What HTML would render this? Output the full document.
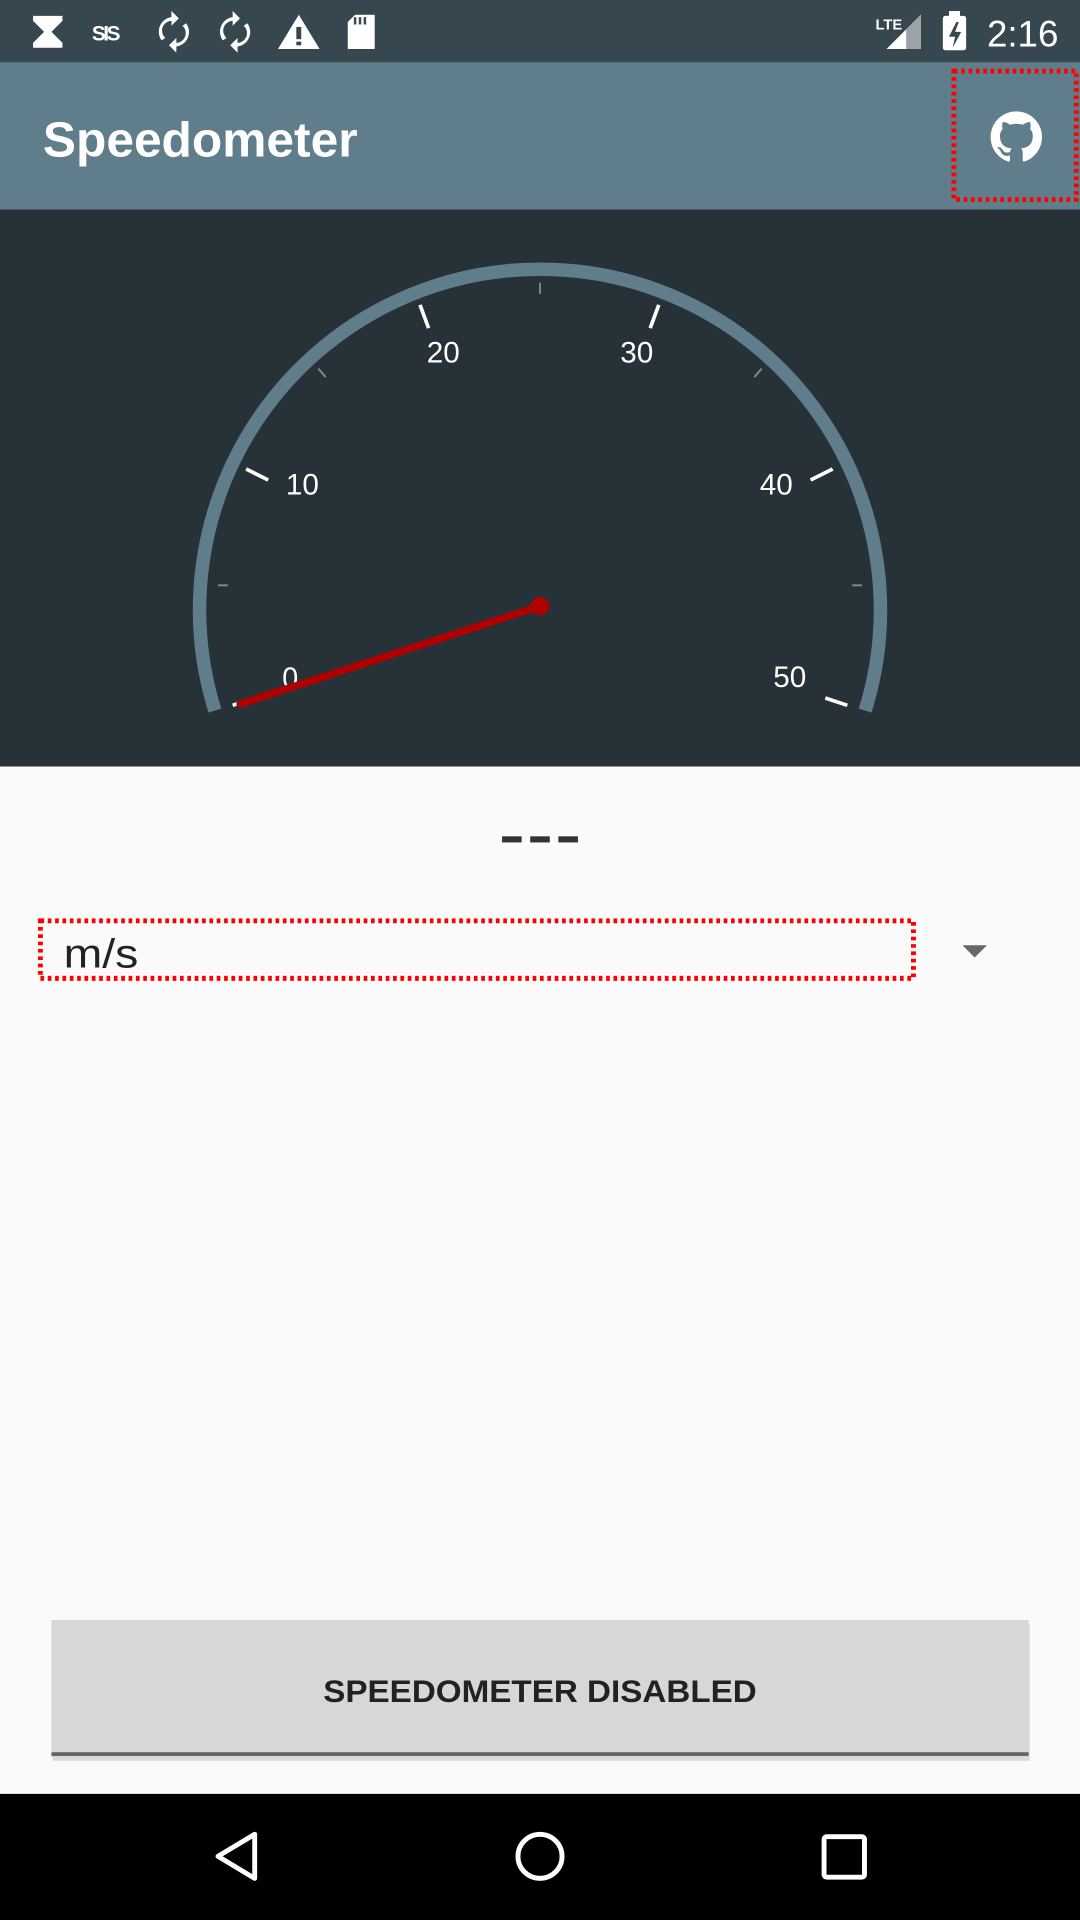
<!DOCTYPE html>
<html><head><meta charset="utf-8">
<style>
html,body{margin:0;padding:0;background:#fafafa;}
svg{display:block;}
text{font-family:"Liberation Sans",sans-serif;}
</style></head>
<body>
<svg width="1080" height="1920" viewBox="0 0 882 1568" xmlns="http://www.w3.org/2000/svg">
<!-- status bar -->
<rect x="0" y="0" width="882" height="51" fill="#37474f"/>
<g fill="#fff">
  <path d="M27 13h24v4l-9 9 9 9v4H27v-4l9-9-9-9z"/>
  <text x="75" y="33" font-size="17" font-weight="bold" letter-spacing="-2">SIS</text>
  <path d="M140 14a12 12 0 0 0-8 19l3-2a8 8 0 0 1 5-14v4l6-6-6-6zM144 38a12 12 0 0 0 8-19l-3 2a8 8 0 0 1-5 14v-4l-6 6 6 6z"/>
  <path d="M190 14a12 12 0 0 0-8 19l3-2a8 8 0 0 1 5-14v4l6-6-6-6zM194 38a12 12 0 0 0 8-19l-3 2a8 8 0 0 1-5 14v-4l-6 6 6 6z"/>
  <path d="M244 12l17 28h-34z"/>
  <path d="M290 12h16v28h-22v-22z"/>
  <path d="M724 40l28-28v28z" fill="#fff"/>
  <path d="M740 24l12-12v28h-12z" fill="#9aa4a8"/>
  <text x="715" y="24" font-size="12" font-weight="bold">LTE</text>
  <rect x="770" y="13" width="19" height="28" rx="2"/>
  <rect x="775" y="9" width="9" height="5"/>
  <text x="806" y="38" font-size="30">2:16</text>
</g>
<path d="M781 18l-6 12h5l-2 9 7-13h-5l3-8z" fill="#37474f"/>
<rect x="289" y="14" width="2" height="6" fill="#37474f"/><rect x="293" y="14" width="2" height="6" fill="#37474f"/><rect x="297" y="14" width="2" height="6" fill="#37474f"/>
<rect x="242" y="22" width="4" height="10" fill="#37474f"/><rect x="242" y="34" width="4" height="3" fill="#37474f"/>

<!-- app bar -->
<rect x="0" y="51" width="882" height="120" fill="#607d8b"/>
<text x="35" y="128" font-size="40" font-weight="bold" fill="#fff" textLength="257" lengthAdjust="spacingAndGlyphs">Speedometer</text>
<g transform="translate(809 91) scale(2.625)" fill="#fff">
<path d="M8 0C3.58 0 0 3.580 0 8c0 3.54 2.29 6.53 5.47 7.59.4.07.55-.17.55-.38 0-.19-.01-.82-.01-1.49-2.01.37-2.53-.49-2.69-.94-.09-.23-.48-.94-.82-1.130-.28-.15-.68-.52-.01-.53.63-.01 1.080.58 1.23.82.72 1.21 1.87.87 2.33.66.07-.52.28-.87.51-1.07-1.78-.2-3.64-.89-3.64-3.95 0-.87.31-1.59.82-2.15-.08-.2-.36-1.02.08-2.12 0 0 .67-.21 2.2.82.64-.18 1.32-.27 2-.27.68 0 1.36.09 2 .27 1.53-1.04 2.2-.82 2.2-.82.44 1.1.16 1.92.08 2.12.51.56.82 1.27.82 2.15 0 3.07-1.87 3.75-3.65 3.95.29.25.54.73.54 1.48 0 1.07-.01 1.93-.01 2.2 0 .21.15.46.55.38A8.013 8.013 0 0 0 16 8c0-4.42-3.58-8-8-8z"/>
</g>
<rect x="779" y="58" width="100" height="105" fill="none" stroke="#f00" stroke-width="4" stroke-dasharray="3 3"/>

<!-- gauge -->
<rect x="0" y="171" width="882" height="455" fill="#263238"/>
<path d="M175.5 580.3 A278 278 0 1 1 706.5 580.3" fill="none" stroke="#607d8b" stroke-width="11"/>
<g stroke="#fff" stroke-width="3">
  <line x1="190" y1="576" x2="208" y2="570"/>
  <line x1="201" y1="383" x2="219" y2="392"/>
  <line x1="343" y1="249" x2="350" y2="268"/>
  <line x1="538" y1="249" x2="531" y2="268"/>
  <line x1="680" y1="383" x2="662" y2="392"/>
  <line x1="692" y1="576" x2="674" y2="570"/>
</g>
<g stroke="#78909c" stroke-width="1.5">
  <line x1="178" y1="478" x2="186" y2="478"/>
  <line x1="260" y1="301" x2="266" y2="308"/>
  <line x1="441" y1="231" x2="441" y2="240"/>
  <line x1="622" y1="301" x2="616" y2="308"/>
  <line x1="704" y1="478" x2="696" y2="478"/>
</g>
<g fill="#fff" font-size="24" text-anchor="middle">
  <text x="237" y="562" textLength="13" lengthAdjust="spacingAndGlyphs">0</text>
  <text x="247" y="404" textLength="27" lengthAdjust="spacingAndGlyphs">10</text>
  <text x="362" y="296" textLength="27" lengthAdjust="spacingAndGlyphs">20</text>
  <text x="520" y="296" textLength="27" lengthAdjust="spacingAndGlyphs">30</text>
  <text x="634" y="404" textLength="27" lengthAdjust="spacingAndGlyphs">40</text>
  <text x="645" y="561" textLength="27" lengthAdjust="spacingAndGlyphs">50</text>
</g>
<line x1="441" y1="495" x2="196" y2="575" stroke="#b00000" stroke-width="6" stroke-linecap="round"/>
<circle cx="441" cy="495" r="7.5" fill="#b00000"/>

<!-- content -->
<rect x="0" y="626" width="882" height="839" fill="#fafafa"/>
<g fill="#333">
  <rect x="410" y="683" width="16" height="5"/>
  <rect x="433" y="683" width="16" height="5"/>
  <rect x="456" y="683" width="16" height="5"/>
</g>
<text x="52" y="790" font-size="33" fill="#222" textLength="61" lengthAdjust="spacingAndGlyphs">m/s</text>
<rect x="33" y="752" width="713" height="47" fill="none" stroke="#f00" stroke-width="4" stroke-dasharray="3 3"/>
<path d="M786 772h20l-10 10z" fill="#666"/>

<!-- button -->
<rect x="43" y="1326" width="798" height="112" fill="#000" opacity="0.12"/>
<rect x="42" y="1323" width="798" height="112" fill="#d6d7d7"/>
<rect x="42" y="1431" width="798" height="3" fill="#5f6367"/>
<text x="264" y="1390" font-size="26" font-weight="bold" fill="#222" textLength="354" lengthAdjust="spacingAndGlyphs">SPEEDOMETER DISABLED</text>

<!-- nav bar -->
<rect x="0" y="1465" width="882" height="103" fill="#000"/>
<path d="M208 1498v36l-30-18z" fill="none" stroke="#fff" stroke-width="4" stroke-linejoin="round"/>
<circle cx="441" cy="1516" r="18" fill="none" stroke="#fff" stroke-width="4"/>
<rect x="673" y="1500" width="33" height="33" fill="none" stroke="#fff" stroke-width="4" rx="2"/>
</svg>
</body></html>
